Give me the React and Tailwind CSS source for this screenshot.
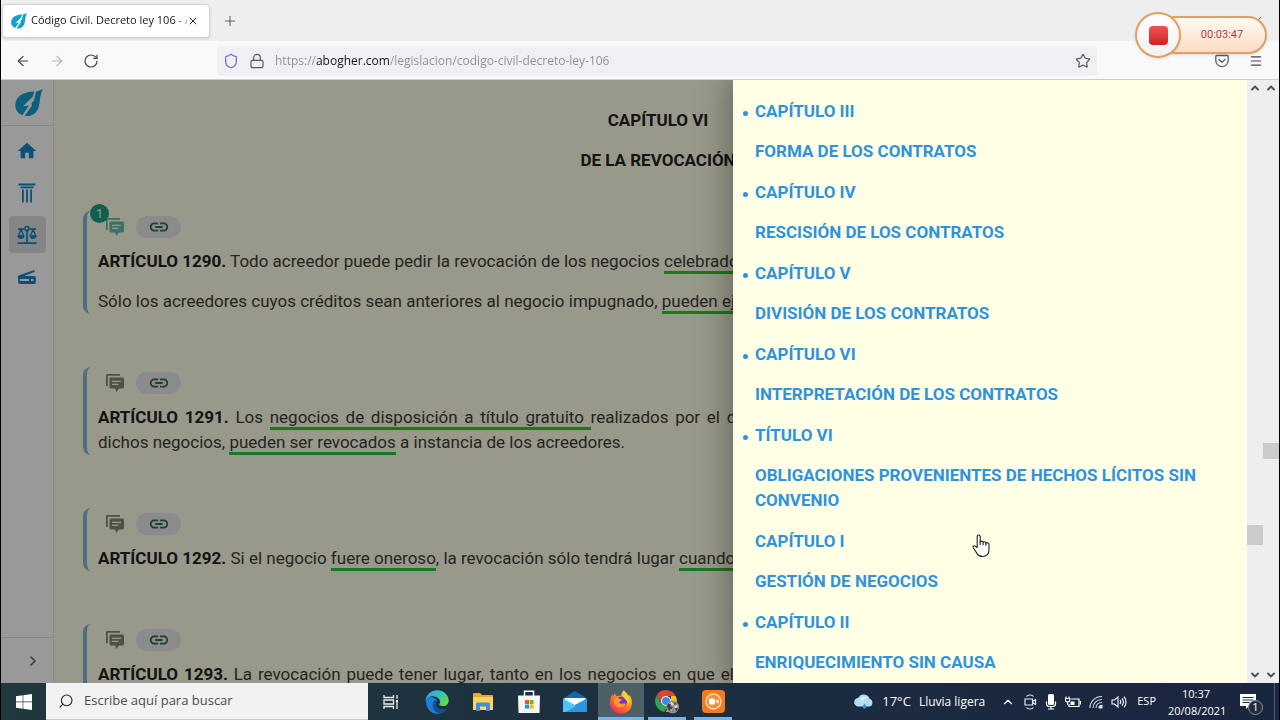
import React from 'react';
import { ArrowLeft, ArrowRight, ChevronDown, ChevronRight, ChevronUp, Lock, Menu, Plus, RotateCw, Search, Shield, Star, X } from 'lucide-react';
import { MdHome, MdLink } from 'react-icons/md';

const INDEX = [
  { title: 'CAPÍTULO III', name: 'FORMA DE LOS CONTRATOS', bullet: true },
  { title: 'CAPÍTULO IV', name: 'RESCISIÓN DE LOS CONTRATOS', bullet: true },
  { title: 'CAPÍTULO V', name: 'DIVISIÓN DE LOS CONTRATOS', bullet: true },
  { title: 'CAPÍTULO VI', name: 'INTERPRETACIÓN DE LOS CONTRATOS', bullet: true },
  { title: 'TÍTULO VI', name: 'OBLIGACIONES PROVENIENTES DE HECHOS LÍCITOS SIN CONVENIO', bullet: true },
  { title: 'CAPÍTULO I', name: 'GESTIÓN DE NEGOCIOS', bullet: false },
  { title: 'CAPÍTULO II', name: 'ENRIQUECIMIENTO SIN CAUSA', bullet: true },
];

/* ---------- Icons ---------- */

function AbogherLogo({ className }) {
  return (
    <svg viewBox="0 0 28 28" className={className} aria-hidden="true">
      <path fill="#14a0d2" d="M19.500 2.500C10 2.500 1.200 6.500.3 15c-.5 5.500 2.700 9.800 7 11.300L14 16.500l-6 .8L17.500 8z" />
      <path fill="#14a0d2" d="M28 0 21 2.800l-2 8.700-2.500 2.500.5 2.500L9.500 27c7.500.8 13-3 14.500-10C25.500 10 25 5 28 0z" />
    </svg>
  );
}

function PillarIcon() {
  return (
    <svg viewBox="0 0 20 20" className="w-5 h-5" fill="currentColor" aria-hidden="true">
      <path d="M1.500.5h17v2h-17zM3.500 3.500h13v1.700h-13zM5 6.500h1.800v13H5zM9.100 6.500h1.800v13H9.100zM13.200 6.500H15v13h-1.800z" />
    </svg>
  );
}

function ScalesIcon() {
  return (
    <svg viewBox="0 0 20 20" className="w-5 h-5" fill="none" stroke="currentColor" strokeWidth="1.700" aria-hidden="true">
      <path d="M1 4.200h6M13 4.200h6M10 6v12M.5 18.200h19" />
      <circle cx="10" cy="3.500" r="2" />
      <path d="M4 4.500 1.200 11h5.600zM16 4.500 13.200 11h5.600z" strokeWidth="1.300" />
      <path d="M1 11h6c0 3.500-6 3.500-6 0zM13 11h6c0 3.500-6 3.500-6 0z" fill="currentColor" strokeWidth=".6" />
    </svg>
  );
}

function ScannerIcon() {
  return (
    <svg viewBox="0 1 20 20" className="w-5 h-5" fill="currentColor" aria-hidden="true">
      <path d="M1 9.800 17.200 4l.7 1.800L7 10h10c1 0 1.800.8 1.800 1.800v4.400c0 1-.8 1.800-1.800 1.800H3c-1 0-1.800-.8-1.800-1.800zM3 13v2h9v-2zm11 0v2h2.500v-2z" fillRule="evenodd" />
    </svg>
  );
}

function CommentsIcon({ className }) {
  return (
    <svg viewBox="0 0 18 18" className={className} fill="currentColor" aria-hidden="true">
      <path d="M0 1.500C0 .6.600 0 1.500 0H14v1.800H1.800V12H0z" />
      <path fillRule="evenodd" d="M5 3.500h11.500c.8 0 1.500.7 1.500 1.500v8c0 .8-.7 1.500-1.500 1.500H13L10.300 18 9 14.500H5c-.8 0-1.500-.7-1.500-1.500V5c0-.8.7-1.500 1.500-1.500zM6 6.800v1.300h9V6.800zm0 3v1.300h6.500V9.800z" />
    </svg>
  );
}

function PocketIcon() {
  return (
    <svg viewBox="0 0 14 14" className="w-3.5 h-3.5" fill="none" stroke="#5b5b66" strokeWidth="1.300" strokeLinecap="round" strokeLinejoin="round" aria-hidden="true">
      <path d="M1.800 1.500h10.400c.6 0 1 .4 1 1v4a6.200 6.200 0 0 1-12.400 0v-4c0-.6.4-1 1-1z" />
      <path d="m4 5.500 3 2.800 3-2.800" />
    </svg>
  );
}

function WindowsIcon() {
  return (
    <svg viewBox="0 0 16 16" className="w-4 h-4" fill="#fff" aria-hidden="true">
      <path d="M0 2.300 6.700 1.300v6.300H0zM7.300 1.200 16 0v7.600H7.300zM0 8.300h6.700v6.400L0 13.700zM7.300 8.300H16V16l-8.700-1.200z" />
    </svg>
  );
}

function TaskViewIcon() {
  return (
    <svg viewBox="0 0 16 16" className="w-4 h-4" fill="none" stroke="#e8ecee" strokeWidth="1.300" aria-hidden="true">
      <path d="M1 1v2.500h9.500V1M1 15v-2.500h9.500V15M1 6h9.500v4H1zM14 1v4M14 8v7" />
      <path d="M13 6h2v2h-2z" fill="#fff" stroke="none" />
    </svg>
  );
}

function EdgeIcon() {
  return (
    <svg viewBox="0 0 24 24" className="w-6 h-6" aria-hidden="true">
      <defs>
        <linearGradient id="edgeTop" x1="0" y1="0" x2="1" y2=".5">
          <stop offset="0" stopColor="#2aa4e4" />
          <stop offset=".6" stopColor="#35c1c0" />
          <stop offset="1" stopColor="#66d84c" />
        </linearGradient>
      </defs>
      <path fill="#1b7fd4" d="M.6 10C1 18 5 23.500 12 23.800c4 .1 7.500-1.800 9.700-5-5 2.500-11 .5-11-4.800 0-1.500.6-2.700 1.500-3.500C9 5.500 2 6 .6 10z" />
      <path fill="url(#edgeTop)" d="M.5 11C1.200 4.500 6 .3 12 .3c7 0 11.700 5 11.700 10.200 0 3.500-2.600 5.500-5.600 5.500-2.500 0-4-.8-4-1.500 0-.6 1-1 1-2.700C15 9 12 6.200 8 6.200 4.500 6.200 1.500 8 .5 11z" />
      <path fill="#134f9c" d="M8.500 11.500c-2.600 5 .5 11.500 6.500 12 2.700-.6 5.200-2.300 6.700-4.700-5 2.500-11 .5-11-4.800 0-1.500.6-2.700 1.500-3.500-1.500 0-3 .2-3.700 1z" />
    </svg>
  );
}

function ExplorerIcon() {
  return (
    <svg viewBox="0 0 20 18" className="w-5 h-[18px]" aria-hidden="true">
      <path fill="#e8a92c" d="M0 1c0-.6.4-1 1-1h6l2 2h10c.6 0 1 .4 1 1v4H0z" />
      <path fill="#fcd462" d="M0 4h20v13H0z" />
      <path fill="#3f8fd6" d="M3 11c0-1 .6-1.500 1.500-1.500h11c.9 0 1.500.5 1.500 1.500v7h-4v-4.500H7V18H3z" />
    </svg>
  );
}

function StoreIcon() {
  return (
    <svg viewBox="0 0 22 23" className="w-[22px] h-[23px]" aria-hidden="true">
      <path d="M6.500 6V1.200h9V6" fill="none" stroke="#fff" strokeWidth="1.500" />
      <path fill="#f6f6f6" d="M0 5.500h22L21.500 23H.5z" />
      <path fill="#f25022" d="M7 10h4v4H7z" />
      <path fill="#7fba00" d="M11.600 10h4v4h-4z" />
      <path fill="#00a4ef" d="M7 14.600h4v4H7z" />
      <path fill="#ffb900" d="M11.600 14.600h4v4h-4z" />
    </svg>
  );
}

function MailIcon() {
  return (
    <svg viewBox="0 0 24 21" className="w-6 h-[21px]" aria-hidden="true">
      <path fill="#1069b4" d="M0 7.500 12 0l12 7.500V21H0z" />
      <path fill="#fff" d="M1.500 7h21v3L12.500 15.500 1.500 10z" />
      <path fill="#36a7ec" d="M0 7.500 13 15l-3 6H0z" />
      <path fill="#2b95e2" d="M24 7.500V21H0l4-3z" />
      <path fill="#52c1f7" d="M0 7.500V21h3l10-6z" />
    </svg>
  );
}

function FirefoxIcon() {
  return (
    <svg viewBox="0 0 24 24" className="w-6 h-6" aria-hidden="true">
      <defs>
        <linearGradient id="fox" x1=".9" y1="0" x2=".2" y2="1">
          <stop offset="0" stopColor="#ffe226" />
          <stop offset=".45" stopColor="#ff8a1e" />
          <stop offset="1" stopColor="#f5235f" />
        </linearGradient>
      </defs>
      <path fill="url(#fox)" d="M14.500.5c3 2 4 4 4.500 5.500 1-.5.800-1.500.8-1.500 2.500 2.500 3.500 5.500 3.200 9C22.500 19.500 17.800 23.800 12 23.800S1 19 1 12.500C1 9.500 2 6 3.500 4.200L4 6.500 6 3.200c.3 1.600 1 2.500 2 3 2-.7 3.500-.2 4-.2C12 4 13 2 14.500.5z" />
      <circle cx="12.500" cy="12" r="5.500" fill="#7139c8" />
      <path fill="#ff9a22" d="M5.500 9c2-1.500 3.500-1.200 4.800-.3 1 .6 1.700.5 2.700.6-.2 1.700-2.500 1.500-2.700 2.700-.2 1.400 1.500 2.200 3 1.700 1.500-.4 3.200-.5 3.500.2-1 3.700-5.300 4.500-8.300 3-3.200-1.500-4.200-5-3-7.900z" />
      <path fill="#ffcf2f" d="M14.500.5c3 2 4 4 4.500 5.500 2 3 2 7 0 10 .2-4-1.500-6-3.500-7.500-2-1.600-2.500-5-1-8z" />
    </svg>
  );
}

function ChromeIcon() {
  return (
    <svg viewBox="0 0 24 24" className="w-6 h-6" aria-hidden="true">
      <path fill="#e04434" d="M1.500 5.500a11 11 0 0 1 19.200.5H11l-4.500 7z" />
      <path fill="#2da44e" d="M1.500 5.500 7 14.500l5 2-2.500 5.400A11 11 0 0 1 1.500 5.500z" />
      <path fill="#fbc21b" d="M20.700 6a11 11 0 0 1-9.900 16L15.500 14l.5-8z" />
      <circle cx="11" cy="11" r="5" fill="#fff" />
      <circle cx="11" cy="11" r="4" fill="#4285f4" />
      <circle cx="17.500" cy="17" r="6.500" fill="#8f8f8b" />
      <path fill="#3d3d3b" d="M13 13.500l3 1-1 2 3 .5-2 2.500 2 2.500-4-1.500-2-4zM19 12l2.500 2-2 1zM20 18l3 .5-2 3z" />
      <path fill="#d9d9d4" d="M16 11.500l3 2.500-1 2-2.500-2zM19 16l3-1 1 2-3 1zM15 19l2 1-1 2z" />
    </svg>
  );
}

function RecorderIcon() {
  return (
    <svg viewBox="0 0 23 23" className="w-[23px] h-[23px]" aria-hidden="true">
      <rect width="23" height="23" rx="4" fill="#f47b20" />
      <circle cx="11.500" cy="11.500" r="7.500" fill="#f58d3c" stroke="#fde0c4" strokeWidth="1.300" />
      <rect x="7" y="8.500" width="6" height="6" rx="1" fill="#fff" />
      <path fill="#fff" d="m13.500 11.500 3-2.500v5z" />
    </svg>
  );
}

function RainIcon() {
  return (
    <svg viewBox="0 0 20 15" className="w-5 h-[15px]" aria-hidden="true">
      <path fill="#b7dcf5" d="M4.500 12.500A4.200 4.200 0 0 1 4.300 4 6 6 0 0 1 15.500 4.800a4 4 0 0 1 0 7.700z" />
      <path fill="#e4f3fd" d="M6 5.500C7 3 10.500 2 13 4c-2.500 0-4 1.500-4.500 3z" />
      <path fill="#3b8fdc" d="M10.500 9.500c1.200 1.800 1.800 2.600 1.800 3.500a1.800 1.800 0 0 1-3.600 0c0-.9.700-1.700 1.800-3.500z" />
    </svg>
  );
}

function MeetIcon() {
  return (
    <svg viewBox="0 0 14 16" className="w-3.5 h-4" fill="none" stroke="#e6eaf0" strokeWidth="1.200" aria-hidden="true">
      <path d="M3.500 2.500C5 .5 9 .5 10.500 2.500M3.500 13.500c1.500 2 5.500 2 7 0M2 5h7.500v6H2zM9.500 7.500l3-2v5l-3-2" />
    </svg>
  );
}

function MicIcon() {
  return (
    <svg viewBox="0 0 12 16" className="w-3 h-4" aria-hidden="true">
      <rect x="3" y="0" width="6" height="11" rx="1.500" fill="#fff" />
      <path d="M1.500 7.500v2.300c0 1.500 1 2.700 2.700 2.700h3.600c1.700 0 2.700-1.200 2.700-2.700V7.500M6 12.500v2M3 15h6" fill="none" stroke="#fff" strokeWidth="1.200" />
    </svg>
  );
}

function BatteryIcon() {
  return (
    <svg viewBox="0 0 16 12" className="w-4 h-3" fill="none" stroke="#fff" strokeWidth="1.200" aria-hidden="true">
      <path d="M6 3h8v7.500H4V8M15.500 5v3.500" />
      <path d="M1 .5v2M4 .5v2M.5 2.500h4.200v1.800c0 1-1 1.700-2 1.700S.5 5.300.5 4.300zM2.600 6v3" />
      <path d="M5.500 5.500h4v3.500h-4z" fill="#fff" stroke="none" />
    </svg>
  );
}

function WifiIcon() {
  return (
    <svg viewBox="0 0 14 14" className="w-3.5 h-3.5" fill="none" stroke="#d7dde6" strokeWidth="1.100" aria-hidden="true">
      <path d="M1 13C1 6.500 6 1.500 13 1.500M4 13c0-5 4-8.500 9-8.500M7 13c0-3.300 2.700-5.500 6-5.500" />
      <path d="M10 13c0-1.700 1.300-2.700 3-2.700V13z" fill="#fff" />
    </svg>
  );
}

function SpeakerIcon() {
  return (
    <svg viewBox="0 0 16 14" className="w-4 h-3.5" fill="none" stroke="#fff" strokeWidth="1.100" aria-hidden="true">
      <path d="M1 5h2.500L7 2v10L3.500 9H1zM9 5c.8 1.200.8 2.800 0 4M11 3.300c1.700 2.300 1.700 5.100 0 7.400M13 1.600c2.500 3.300 2.500 7.500 0 10.800" />
    </svg>
  );
}

/* ---------- Browser chrome ---------- */

function TabBar() {
  return (
    <div className="h-[41px] shrink-0 flex items-center bg-[#eeeeef] pl-px">
      <div className="w-[208px] h-[34px] flex items-center pl-2 pr-2.5 bg-white rounded border border-[#d4d4d8] shadow-sm">
        <AbogherLogo className="w-4 h-4 mr-1 shrink-0" />
        <span className="flex-1 overflow-hidden whitespace-nowrap text-[11px] bg-clip-text text-transparent bg-[linear-gradient(to_right,#15141a_92%,transparent_104%)]">
          Código Civil. Decreto ley 106 - A
        </span>
        <button type="button" aria-label="Cerrar pestaña">
          <X className="w-3 h-3 text-[#2b2a33]" />
        </button>
      </div>
      <button type="button" aria-label="Nueva pestaña" className="ml-3">
        <Plus className="w-4 h-4 text-[#5b5b66]" strokeWidth={1.5} />
      </button>
      <button type="button" aria-label="Cerrar ventana" className="ml-auto mr-3.5">
        <X className="w-4 h-4 text-[#2b2a33]" strokeWidth={1} />
      </button>
    </div>
  );
}

function Toolbar() {
  return (
    <div className="h-[39px] shrink-0 flex items-center bg-[#f9f9fb] border-b border-[#ccccd0] pt-0.5 pl-3.5 pr-4">
      <div className="flex gap-[18px]">
        <button type="button" aria-label="Atrás"><ArrowLeft className="w-4 h-4 text-[#3f3f48]" strokeWidth={1.8} /></button>
        <button type="button" aria-label="Adelante"><ArrowRight className="w-4 h-4 text-[#b4b4ba]" strokeWidth={1.8} /></button>
        <button type="button" aria-label="Recargar"><RotateCw className="w-4 h-4 text-[#4a4a53]" strokeWidth={1.8} /></button>
      </div>
      <div className="flex-1 h-[30px] flex items-center mx-[118px] px-1.5 bg-[#f0f0f4] rounded-sm">
        <Shield className="w-4 h-4 text-[#7377d8]" strokeWidth={2} />
        <Lock className="w-4 h-4 ml-2.5 text-[#5b5b66]" strokeWidth={1.8} />
        <input
          type="text"
          aria-label="Dirección"
          defaultValue="https://abogher.com/legislacion/codigo-civil-decreto-ley-106"
          className="flex-1 ml-2.5 text-xs outline-none bg-clip-text text-transparent bg-[linear-gradient(to_right,#8d8d94_41px,#15141a_41px,#15141a_114px,#8d8d94_114px)]"
        />
        <button type="button" aria-label="Marcador"><Star className="w-4 h-4 text-[#5b5b66]" strokeWidth={1.8} /></button>
      </div>
      <div className="flex items-center gap-5">
        <button type="button" aria-label="Pocket"><PocketIcon /></button>
        <button type="button" aria-label="Menú"><Menu className="w-3.5 h-3.5 text-[#45454e]" /></button>
      </div>
    </div>
  );
}

function RecorderBadge() {
  return (
    <div className="absolute top-3 right-3 z-30 flex items-center">
      <button
        type="button"
        aria-label="Detener grabación"
        className="relative z-10 w-[46px] h-[46px] flex items-center justify-center rounded-full border-2 border-[#dfa060] bg-gradient-to-b from-white to-[#f4f1ef] shadow"
      >
        <span className="w-[19px] h-[19px] rounded bg-gradient-to-b from-[#ee5350] to-[#cc2222]" />
      </button>
      <div className="-ml-6 w-[110px] h-[38px] flex items-center justify-center pl-5 rounded-full border-2 border-[#dfa060] bg-gradient-to-b from-[#fffaf5] to-[#fcdcc4] shadow">
        <time className="text-[11px] text-[#b83a48] font-['Roboto',sans-serif]">00:03:47</time>
      </div>
    </div>
  );
}

function Scrollbar({ before, after, thumb }) {
  return (
    <div className="w-4 shrink-0 flex flex-col items-center bg-[#eeeeee]" aria-hidden="true">
      <ChevronUp className="w-3 h-4 text-[#555]" strokeWidth={4} />
      <div style={{ flexGrow: before }} />
      <div className={`w-full bg-[#cbcbcb] ${thumb}`} />
      <div style={{ flexGrow: after }} />
      <ChevronDown className="w-3 h-4 text-[#555]" strokeWidth={4} />
    </div>
  );
}

/* ---------- Site ---------- */

function Sidebar() {
  const item = 'w-[37px] h-[37px] flex items-center justify-center rounded-sm text-[#1585c4]';
  return (
    <nav className="w-[53px] shrink-0 flex flex-col bg-white border-r border-[#e4e4ea]">
      <a href="#inicio" aria-label="Abogher" className="h-[46px] shrink-0 flex items-center justify-center pl-1 border-b border-[#dcdce0]">
        <AbogherLogo className="w-7 h-7" />
      </a>
      <div className="flex-1 flex flex-col items-center gap-[5px] pt-1.5">
        <a href="#home" aria-label="Inicio" className={item}><MdHome className="w-[22px] h-[22px]" /></a>
        <a href="#leyes" aria-label="Leyes" className={item}><PillarIcon /></a>
        <a href="#legislacion" aria-label="Legislación" className={`${item} bg-[#dedede]`}><ScalesIcon /></a>
        <a href="#escaner" aria-label="Escáner" className={item}><ScannerIcon /></a>
      </div>
      <button type="button" aria-label="Expandir" className="h-[46px] shrink-0 flex items-center justify-end pr-3 border-t border-[#dcdce0]">
        <ChevronRight className="w-4 h-4 text-[#666]" strokeWidth={2.5} />
      </button>
    </nav>
  );
}

function Mark({ children }) {
  return <span className="border-b-[3px] border-[#2cc832]">{children}</span>;
}

function Article({ number, comments, children }) {
  return (
    <article className="border-l-4 border-[#88b8d8] rounded-lg pt-[5px] pl-[11px]">
      <div className="flex items-center h-[22px] mb-[11px] pl-2">
        <button type="button" aria-label="Comentarios" className="relative">
          <CommentsIcon className={comments ? 'w-[18px] h-[18px] text-[#66bbaa]' : 'w-[18px] h-[18px] text-[#85857b]'} />
          {comments && (
            <span className="absolute -top-3.5 -left-4 w-[19px] h-[19px] flex items-center justify-center rounded-full bg-[#18a085] text-white text-xs">
              {comments}
            </span>
          )}
        </button>
        <button type="button" aria-label="Copiar enlace" className="ml-3 w-[45px] h-[22px] flex items-center justify-center rounded-full bg-[#e8e8ec]">
          <MdLink className="w-[22px] h-[22px] text-[#2f7040]" />
        </button>
      </div>
      <div className="space-y-[15px] text-justify">{children(<strong className="text-[#222]">ARTÍCULO {number}.</strong>)}</div>
    </article>
  );
}

function Document() {
  return (
    <main className="flex-1 min-w-0 overflow-hidden bg-[#ffffe8] pt-7 pl-[29px] pr-[45px] text-[#3c3c38]">
      <header className="pl-[15px] mb-[38px] space-y-[15px] text-center font-bold text-[#222]">
        <h1>CAPÍTULO VI</h1>
        <h2>DE LA REVOCACIÓN</h2>
      </header>
      <div className="space-y-[53px]">
        <Article number="1290" comments={1}>
          {(label) => (
            <>
              <p>{label} Todo acreedor puede pedir la revocación de los negocios <Mark>celebrados por el deudor</Mark>, en perjuicio de sus derechos.</p>
              <p>Sólo los acreedores cuyos créditos sean anteriores al negocio impugnado, <Mark>pueden ejercitar la acción revocatoria</Mark>.</p>
            </>
          )}
        </Article>
        <Article number="1291">
          {(label) => (
            <p>{label} Los <Mark>negocios de disposición a título gratuito </Mark>realizados por el deudor insolvente, o que quede reducido a una insolvencia por <span className="whitespace-nowrap">dichos negocios,</span> <Mark>pueden ser revocados</Mark> a instancia de los acreedores.</p>
          )}
        </Article>
        <Article number="1292">
          {(label) => (
            <p>{label} Si el negocio <Mark>fuere oneroso</Mark>, la revocación sólo tendrá lugar <Mark>cuando exista mala fe</Mark> en ambas partes.</p>
          )}
        </Article>
        <Article number="1293">
          {(label) => (
            <p>{label} La revocación puede tener lugar, tanto en los negocios en que el deudor enajena los bienes que efectivamente posee, como en aquellos en que renuncia derechos constituidos a su favor.</p>
          )}
        </Article>
      </div>
    </main>
  );
}

function IndexDrawer() {
  return (
    <aside className="absolute inset-y-0 right-0 z-20 w-[530px] flex bg-[#ffffe6] shadow-[0_0_30px_4px_rgba(0,0,0,0.35)]">
      <ul className="flex-1 min-w-0 overflow-hidden pt-[19px] pl-[22px] pr-10 space-y-4 font-bold text-[#2e93dc]">
        {INDEX.map((entry) => (
          <li key={entry.title + entry.name} className={entry.bullet ? "relative before:content-[''] before:absolute before:-left-3 before:top-3 before:w-[5px] before:h-[5px] before:rounded-full before:bg-[#2e93dc]" : 'relative'}>
            <a href="#indice" className="block space-y-[15px]">
              <p>{entry.title}</p>
              <p>{entry.name}</p>
            </a>
          </li>
        ))}
      </ul>
      <Scrollbar before={429} after={122} thumb="h-5" />
    </aside>
  );
}

function HandCursor() {
  return (
    <svg viewBox="0 0 18 24" className="absolute z-20 top-[454px] left-[971px] w-[18px] h-6" fill="#fff" stroke="#222" strokeWidth="1.100" strokeLinejoin="round" aria-hidden="true">
      <path d="M5.200 13.500V2.500c0-2 3-2 3 0v5.300c.8-1 2.600-.8 2.900.4.900-.8 2.400-.4 2.700.7 1.400-.6 3.200 0 3.200 1.700v5.200c0 4-2.300 6.700-6.400 6.700-3.200 0-4.600-1.200-6-3.600L1.300 13.700c-.8-1.500 1-2.600 2.100-1.500z" />
      <path d="M8.200 7.500V11M11.100 8v3.300M13.900 9v2.800" fill="none" />
    </svg>
  );
}

/* ---------- Taskbar ---------- */

const APPS = [
  { name: 'Vista de tareas', Icon: TaskViewIcon, state: '' },
  { name: 'Edge', Icon: EdgeIcon, state: '' },
  { name: 'Explorador', Icon: ExplorerIcon, state: '' },
  { name: 'Store', Icon: StoreIcon, state: '' },
  { name: 'Correo', Icon: MailIcon, state: '' },
  { name: 'Firefox', Icon: FirefoxIcon, state: 'active' },
  { name: 'Chrome', Icon: ChromeIcon, state: 'open' },
  { name: 'Grabador', Icon: RecorderIcon, state: 'open' },
];

function Taskbar() {
  return (
    <footer className="h-[37px] shrink-0 flex bg-gradient-to-r from-[#20383e] to-[#1a2540] text-white">
      <button type="button" aria-label="Inicio" className="w-[45px] flex items-center justify-center"><WindowsIcon /></button>
      <label className="w-[322px] flex items-center bg-[#f2f2f2] pl-3 border-b border-[#c8c8c8]">
        <Search className="w-4 h-4 -scale-x-100 text-[#222]" strokeWidth={1.6} />
        <input type="search" placeholder="Escribe aquí para buscar" className="flex-1 min-w-0 ml-2.5 text-[13px] bg-transparent outline-none placeholder:text-[#4c4c4c]" />
      </label>
      {APPS.map(({ name, Icon, state }) => (
        <button key={name} type="button" aria-label={name} className={`w-[46px] flex flex-col items-center ${state === 'active' ? 'bg-[#4d6068]' : ''}`}>
          <span className="flex-1 flex items-center"><Icon /></span>
          {state === 'active' && <span className="w-full h-[3px] -mt-[3px] bg-[#76b4ea]" />}
          {state === 'open' && <span className="w-[38px] h-[3px] -mt-[3px] bg-[#76b4ea]" />}
        </button>
      ))}
      <div className="ml-auto flex items-center">
        <RainIcon />
        <span className="ml-2 text-[13px]">17°C</span>
        <span className="ml-2 mr-4 text-xs">Lluvia ligera</span>
        <div className="flex items-center gap-2 mr-2.5">
          <ChevronUp className="w-3.5 h-3.5" strokeWidth={2} />
          <MeetIcon />
          <MicIcon />
          <BatteryIcon />
          <WifiIcon />
          <SpeakerIcon />
        </div>
        <span className="text-[11px]">ESP</span>
        <div className="ml-3 w-[56px] text-center text-[11px] leading-[17px]">
          <p>10:37</p>
          <p>20/08/2021</p>
        </div>
        <button type="button" aria-label="Notificaciones" className="relative ml-4 mr-[18px]">
          <svg viewBox="0 0 16 16" className="w-4 h-4" aria-hidden="true">
            <path fill="#fff" d="M0 0h16v12H9l-3 3v-3H0z" />
            <path stroke="#1b2a42" d="M2.500 3.500h11M2.500 6h11M2.500 8.500h7" />
          </svg>
          <span className="absolute top-1.5 left-2 w-[15px] h-[15px] flex items-center justify-center rounded-full border border-[#8a92a0] bg-[#252c38] text-[11px]">1</span>
        </button>
        <span className="w-px h-full mr-1 bg-[#56607a]" />
      </div>
    </footer>
  );
}

export default function App() {
  return (
    <div className="relative h-screen flex flex-col overflow-hidden bg-white border-x border-black font-['Open_Sans','Noto_Sans',sans-serif]">
      <TabBar />
      <Toolbar />
      <RecorderBadge />
      <div className="relative flex-1 min-h-0 flex font-['Roboto',sans-serif] text-[17px] leading-[25px]">
        <div className="relative flex-1 min-w-0 flex overflow-hidden">
          <Sidebar />
          <Document />
          <div className="absolute inset-0 z-10 bg-black/40" />
          <IndexDrawer />
        </div>
        <Scrollbar before={347} after={208} thumb="h-4" />
        <HandCursor />
      </div>
      <Taskbar />
    </div>
  );
}
